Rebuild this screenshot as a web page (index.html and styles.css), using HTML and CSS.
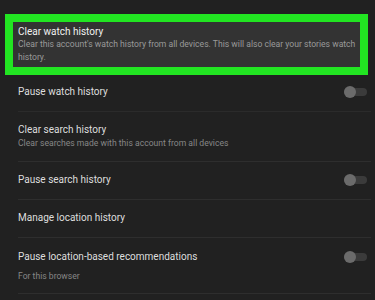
FILE: index.html
```html
<!DOCTYPE html>
<html lang="en">
<head>
    <meta charset="UTF-8">
    <meta name="viewport" content="width=device-width, initial-scale=1.0">
    <title>History settings</title>
    <link rel="stylesheet" href="styles.css">
</head>
<body>
    <div class="settings">
        <div class="highlight">
            <div class="highlight-inner">
                <div class="title">Clear watch history</div>
                <div class="sub">Clear this account's watch history from all devices. This will also clear your stories watch history.</div>
            </div>
        </div>

        <div class="row row-first">
            <div class="text">
                <div class="title">Pause watch history</div>
            </div>
            <div class="toggle"><span class="knob"></span></div>
        </div>

        <div class="row row-sub">
            <div class="text">
                <div class="title">Clear search history</div>
                <div class="sub">Clear searches made with this account from all devices</div>
            </div>
        </div>

        <div class="row">
            <div class="text">
                <div class="title">Pause search history</div>
            </div>
            <div class="toggle"><span class="knob"></span></div>
        </div>

        <div class="row">
            <div class="text">
                <div class="title">Manage location history</div>
            </div>
        </div>

        <div class="row row-last">
            <div class="text">
                <div class="title">Pause location-based recommendations</div>
                <div class="sub">For this browser</div>
            </div>
            <div class="toggle"><span class="knob"></span></div>
        </div>
    </div>
</body>
</html>
```

FILE: styles.css
```css
body {
    margin: 0;
    padding: 0;
    background-color: #212121;
    font-family: Roboto, 'Liberation Sans', sans-serif;
    height: 300px;
    overflow: hidden;
}
.settings {
    padding-top: 14px;
}
.title {
    color: #dedede;
    font-size: 10px;
    line-height: 14px;
}
.sub {
    color: #878787;
    font-size: 8.6px;
    line-height: 12px;
}
.highlight {
    margin-left: 5px;
    width: 347px;
    border: 8px solid #22e522;
    background-color: #333333;
}
.highlight-inner {
    padding: 3px 4px 4px 5px;
}
.highlight-inner .title {
    line-height: 13px;
    color: #f0f0f0;
}
.highlight-inner .sub {
    line-height: 12.5px;
    color: #9a9a9a;
}
.row {
    display: flex;
    align-items: center;
    justify-content: space-between;
    margin-left: 18px;
    margin-right: 4px;
    padding: 11px 4px 12px 0;
    border-bottom: 1px solid #2e2e2e;
}
.row-first {
    padding-top: 10px;
    padding-bottom: 12px;
    border-bottom-color: #2b2b2b;
}
.row-last {
    align-items: flex-start;
    padding-top: 12px;
    padding-bottom: 11px;
}
.row-last .sub {
    margin-top: 6px;
}
.row-last .toggle {
    margin-top: 3px;
}
.toggle {
    position: relative;
    width: 23px;
    height: 8px;
    border-radius: 4px;
    background-color: #3b3b3b;
}
.knob {
    position: absolute;
    left: 0;
    top: -2px;
    width: 12px;
    height: 12px;
    border-radius: 50%;
    background-color: #6b6b6b;
}
```
